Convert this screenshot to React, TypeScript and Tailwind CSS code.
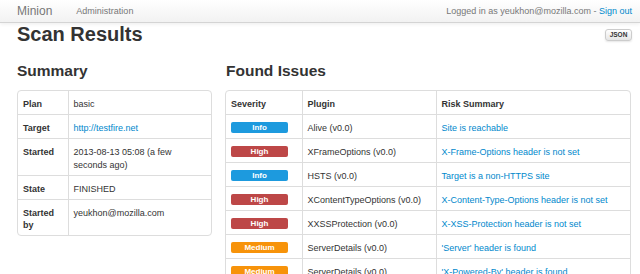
import React from "react";

type Sev = "Info" | "High" | "Medium";

const issues: { sev: Sev; plugin: string; risk: string }[] = [
  { sev: "Info", plugin: "Alive (v0.0)", risk: "Site is reachable" },
  { sev: "High", plugin: "XFrameOptions (v0.0)", risk: "X-Frame-Options header is not set" },
  { sev: "Info", plugin: "HSTS (v0.0)", risk: "Target is a non-HTTPS site" },
  { sev: "High", plugin: "XContentTypeOptions (v0.0)", risk: "X-Content-Type-Options header is not set" },
  { sev: "High", plugin: "XXSSProtection (v0.0)", risk: "X-XSS-Protection header is not set" },
  { sev: "Medium", plugin: "ServerDetails (v0.0)", risk: "'Server' header is found" },
  { sev: "Medium", plugin: "ServerDetails (v0.0)", risk: "'X-Powered-By' header is found" },
];

function Badge({ sev }: { sev: Sev }) {
  const color =
    sev === "Info" ? "bg-[#1d9ade]" : sev === "High" ? "bg-[#bd4747]" : "bg-[#f7930a]";
  return (
    <span
      className={`${color} inline-block w-[57px] h-[11px] leading-[11px] rounded-[2px] text-center text-white font-bold text-[8px]`}
    >
      {sev}
    </span>
  );
}

const cell = "px-[5px] pt-[7px] pb-[3.5px] leading-[12.5px] align-top";

export default function App() {
  return (
    <div className="min-h-screen bg-white text-[#333]" style={{ fontFamily: '"Liberation Sans", Arial, sans-serif' }}>
      <div className="h-[23px] bg-gradient-to-b from-white to-[#f2f2f2] border-b border-[#d4d4d4] shadow-[0_1px_4px_rgba(0,0,0,0.08)]">
        <div className="ml-[17px] w-[615px] h-[22px] flex items-center">
          <span className="text-[12px] leading-[22px] text-[#777]">Minion</span>
          <span className="ml-[24px] text-[9px] leading-[22px] text-[#777]">Administration</span>
          <span className="ml-auto text-[9px] leading-[22px] text-[#777]">
            Logged in as yeukhon@mozilla.com - <span className="text-[#0088cc]">Sign out</span>
          </span>
        </div>
      </div>

      <div className="ml-[17px] w-[615px]">
        <div className="flex items-start justify-between h-[22px]">
          <h1 className="text-[20px] leading-[22px] font-bold text-[#333]">Scan Results</h1>
          <button className="mt-[6px] h-[12px] w-[27px] flex items-center justify-center rounded-[3px] border border-[#ccc] bg-gradient-to-b from-white to-[#e6e6e6] text-[6.5px] font-bold text-[#333] shadow-[0_1px_2px_rgba(0,0,0,0.1)]">
            JSON
          </button>
        </div>

        <div className="mt-[16px] flex gap-[14px]">
          <div className="w-[195px] shrink-0">
            <h2 className="text-[15.5px] leading-[20px] font-bold mb-[9px]">Summary</h2>
            <div className="border border-[#ddd] rounded-[4px] overflow-hidden">
              <table className="w-full table-fixed text-[9px]">
                <colgroup>
                  <col className="w-[50px]" />
                  <col />
                </colgroup>
                <tbody>
                  {[
                    ["Plan", "basic"],
                    ["Target", "http://testfire.net"],
                    ["Started", "2013-08-13 05:08 (a few seconds ago)"],
                    ["State", "FINISHED"],
                    ["Started by", "yeukhon@mozilla.com"],
                  ].map(([k, v], i) => (
                    <tr key={k} className={i > 0 ? "border-t border-[#ddd]" : ""}>
                      <td className={`${cell} font-bold`}>{k}</td>
                      <td className={`${cell} border-l border-[#ddd] ${k === "Target" ? "text-[#0088cc]" : ""}`}>{v}</td>
                    </tr>
                  ))}
                </tbody>
              </table>
            </div>
          </div>

          <div className="w-[406px] shrink-0 -ml-[1px]">
            <h2 className="text-[15.5px] leading-[20px] font-bold mb-[9px] ml-[1px]">Found Issues</h2>
            <div className="border border-[#ddd] rounded-[4px] overflow-hidden">
              <table className="w-full table-fixed text-[9px]">
                <colgroup>
                  <col className="w-[76px]" />
                  <col className="w-[134px]" />
                  <col />
                </colgroup>
                <thead>
                  <tr>
                    <th className={`${cell} text-left font-bold`}>Severity</th>
                    <th className={`${cell} text-left font-bold border-l border-[#ddd]`}>Plugin</th>
                    <th className={`${cell} text-left font-bold border-l border-[#ddd]`}>Risk Summary</th>
                  </tr>
                </thead>
                <tbody>
                  {issues.map((it, i) => (
                    <tr key={i} className="border-t border-[#ddd]">
                      <td className={cell}>
                        <div className="h-[12.5px] flex items-center -mt-[1px]">
                          <Badge sev={it.sev} />
                        </div>
                      </td>
                      <td className={`${cell} border-l border-[#ddd]`}>{it.plugin}</td>
                      <td className={`${cell} border-l border-[#ddd] text-[#0088cc]`}>{it.risk}</td>
                    </tr>
                  ))}
                </tbody>
              </table>
            </div>
          </div>
        </div>
      </div>
    </div>
  );
}
